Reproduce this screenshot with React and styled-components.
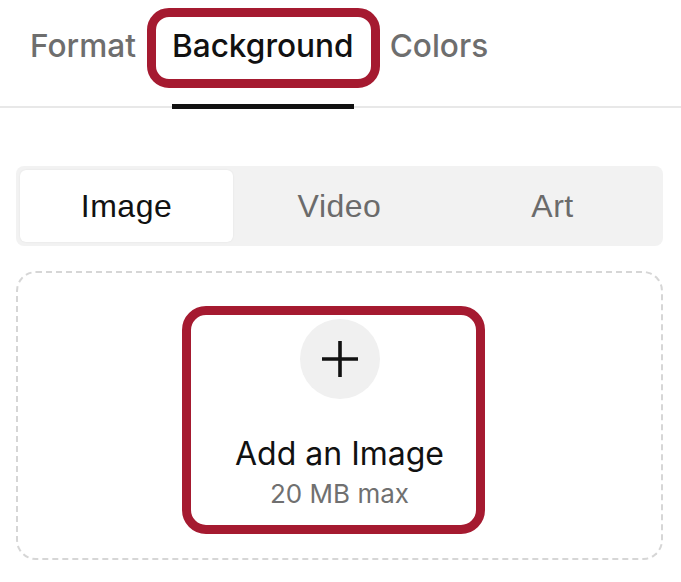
import React, { useState } from 'react';
import styled, { createGlobalStyle } from 'styled-components';

const GlobalStyle = createGlobalStyle`
  html, body {
    margin: 0;
    padding: 0;
    background: #ffffff;
  }
  body {
    font-family: Inter, "Liberation Sans", sans-serif;
    color: #111111;
  }
`;

const tabs = ['Format', 'Background', 'Colors'];
const segments = ['Image', 'Video', 'Art'];

const App = () => {
  const [activeTab, setActiveTab] = useState('Background');
  const [activeSegment, setActiveSegment] = useState('Image');

  return (
    <Page>
      <GlobalStyle />
      <TabBar>
        {tabs.map((tab) => (
          <Tab
            key={tab}
            $active={tab === activeTab}
            onClick={() => setActiveTab(tab)}
          >
            {tab}
            {tab === 'Background' && <TabHighlight />}
          </Tab>
        ))}
      </TabBar>

      <Content>
        <Segmented>
          {segments.map((seg) => (
            <Segment
              key={seg}
              $active={seg === activeSegment}
              onClick={() => setActiveSegment(seg)}
            >
              {seg}
            </Segment>
          ))}
        </Segmented>

        <DropZone>
          <UploadButton>
            <UploadHighlight />
            <PlusCircle>
              <svg width="40" height="40" viewBox="0 0 40 40">
                <path d="M20 2v36M2 20h36" stroke="#111" strokeWidth="3.6" fill="none" />
              </svg>
            </PlusCircle>
            <UploadTitle>Add an Image</UploadTitle>
            <UploadHint>20 MB max</UploadHint>
          </UploadButton>
        </DropZone>
      </Content>
    </Page>
  );
};

const Page = styled.div`
  width: 681px;
  min-height: 582px;
  background: #fff;
`;

const TabBar = styled.div`
  display: flex;
  align-items: flex-end;
  gap: 36px;
  height: 106px;
  padding-left: 30px;
  border-bottom: 2px solid #e8e8e8;
`;

const Tab = styled.div`
  position: relative;
  margin-bottom: -3px;
  padding-bottom: 39px;
  font-size: 31.6px;
  line-height: 38px;
  font-weight: 500;
  color: ${(p) => (p.$active ? '#111111' : '#6e6e6e')};
  border-bottom: 5px solid ${(p) => (p.$active ? '#111111' : 'transparent')};
  cursor: pointer;
  white-space: nowrap;
`;

const TabHighlight = styled.span`
  position: absolute;
  top: -19px;
  left: -25px;
  width: 233px;
  height: 80px;
  box-sizing: border-box;
  border: 9px solid #a51a30;
  border-radius: 22px;
  pointer-events: none;
`;

const Content = styled.div`
  padding: 58px 18px 0 16px;
`;

const Segmented = styled.div`
  display: flex;
  height: 80px;
  box-sizing: border-box;
  padding: 4px;
  background: #f2f2f2;
  border-radius: 8px;
`;

const Segment = styled.div`
  flex: 1;
  display: flex;
  align-items: center;
  justify-content: center;
  font-family: "Liberation Sans", Arial, sans-serif;
  font-size: 32px;
  letter-spacing: 0.5px;
  color: ${(p) => (p.$active ? '#111111' : '#6b6b6b')};
  background: ${(p) => (p.$active ? '#ffffff' : 'transparent')};
  border-radius: 6px;
  box-shadow: ${(p) => (p.$active ? '0 0 2px rgba(0,0,0,0.08)' : 'none')};
  cursor: pointer;
`;

const DropZone = styled.div`
  margin-top: 25px;
  height: 289px;
  box-sizing: border-box;
  border: 2px dashed #d6d6d6;
  border-radius: 20px;
  display: flex;
  justify-content: center;
  padding-top: 46px;
`;

const UploadButton = styled.div`
  position: relative;
  width: 303px;
  height: 189px;
  display: flex;
  flex-direction: column;
  align-items: center;
  cursor: pointer;
`;

const UploadHighlight = styled.span`
  position: absolute;
  top: -13px;
  left: -6px;
  right: 6px;
  bottom: -26px;
  border: 9px solid #a51a30;
  border-radius: 24px;
  pointer-events: none;
`;

const PlusCircle = styled.div`
  width: 80px;
  height: 80px;
  border-radius: 50%;
  background: #f0f0f0;
  display: flex;
  align-items: center;
  justify-content: center;
`;

const UploadTitle = styled.div`
  margin-top: 35px;
  font-size: 32px;
  line-height: 40px;
  color: #111111;
`;

const UploadHint = styled.div`
  margin-top: 6px;
  font-size: 26px;
  line-height: 28px;
  color: #707070;
`;

export default App;
